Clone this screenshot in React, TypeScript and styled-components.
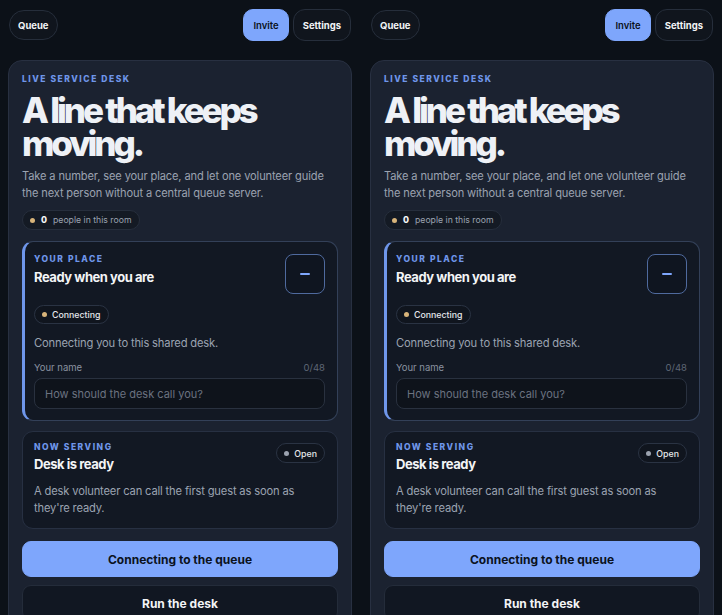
import styled, { createGlobalStyle } from 'styled-components';

const GlobalStyle = createGlobalStyle`
  html, body {
    margin: 0;
    padding: 0;
    background: #0c1118;
    font-family: Inter, "Noto Sans", "Liberation Sans", sans-serif;
    color: #f3f4f6;
  }
  * { box-sizing: border-box; }
`;

function Panel() {
  return (
    <Column>
      <TopBar>
        <PillButton>Queue</PillButton>
        <TopRight>
          <TabButton $active>Invite</TabButton>
          <TabButton>Settings</TabButton>
        </TopRight>
      </TopBar>
      <Card>
        <Eyebrow>Live service desk</Eyebrow>
        <Headline>A line that keeps moving.</Headline>
        <Lead>
          Take a number, see your place, and let one volunteer guide the next person without a central
          queue server.
        </Lead>
        <Chip>
          <Dot $color="#d8b47a" />
          <strong>0</strong> people in this room
        </Chip>

        <SubCard $accent>
          <SubHead>
            <div>
              <Eyebrow>Your place</Eyebrow>
              <SubTitle>Ready when you are</SubTitle>
            </div>
            <SquareButton aria-label="Leave">
              <Minus />
            </SquareButton>
          </SubHead>
          <StatusChip>
            <Dot $color="#d8b47a" />
            Connecting
          </StatusChip>
          <Note>Connecting you to this shared desk.</Note>
          <FieldLabel>
            <span>Your name</span>
            <Counter>0/48</Counter>
          </FieldLabel>
          <NameInput placeholder="How should the desk call you?" />
        </SubCard>

        <SubCard>
          <SubHead>
            <div>
              <Eyebrow>Now serving</Eyebrow>
              <SubTitle $tight>Desk is ready</SubTitle>
            </div>
            <StatusChip $tight>
              <Dot $color="#9ca3af" />
              Open
            </StatusChip>
          </SubHead>
          <Note $spaced>A desk volunteer can call the first guest as soon as they're ready.</Note>
        </SubCard>

        <ActionButton $primary>Connecting to the queue</ActionButton>
        <ActionButton>Run the desk</ActionButton>
      </Card>
    </Column>
  );
}

export default function App() {
  return (
    <>
      <GlobalStyle />
      <Page>
        <Panel />
        <Panel />
      </Page>
    </>
  );
}

const Page = styled.div`
  display: grid;
  grid-template-columns: 344px 344px;
  gap: 18px;
  padding: 0 8px;
  height: 615px;
  overflow: hidden;
`;

const Column = styled.div`
  display: flex;
  flex-direction: column;
`;

const TopBar = styled.div`
  display: flex;
  align-items: center;
  justify-content: space-between;
  padding: 9px 1px 0 1px;
  height: 41px;
  margin-bottom: 19px;
`;

const TopRight = styled.div`
  display: flex;
  gap: 4px;
`;

const PillButton = styled.button`
  height: 30px;
  padding: 0 8px;
  border-radius: 15px;
  border: 1px solid #262e3b;
  background: #10151d;
  color: #f3f4f6;
  font: 700 9.5px Inter, sans-serif;
`;

const TabButton = styled.button<{ $active?: boolean }>`
  height: 32px;
  padding: 0 9px;
  border-radius: ${(p) => (p.$active ? '10px' : '12px')};
  border: 1px solid ${(p) => (p.$active ? '#7ea6fc' : '#262e3b')};
  background: ${(p) => (p.$active ? '#7ea6fc' : '#10151d')};
  color: ${(p) => (p.$active ? '#0b1220' : '#f3f4f6')};
  font: ${(p) => (p.$active ? 600 : 700)} 9.5px Inter, sans-serif;
`;

const Card = styled.div`
  background: #1b2230;
  border: 1px solid #283041;
  border-radius: 14px;
  padding: 12px 13px 20px 13px;
  display: flex;
  flex-direction: column;
  align-items: stretch;
`;

const Eyebrow = styled.div`
  font-size: 8.5px;
  font-weight: 800;
  letter-spacing: 0.18em;
  text-transform: uppercase;
  color: #6f96ea;
  line-height: 12px;
`;

const Headline = styled.h1`
  margin: 9px 0 0 0;
  font-size: 35px;
  font-weight: 800;
  letter-spacing: -0.09em;
  line-height: 33px;
  color: #eef1f6;
  max-width: 250px;
`;

const Lead = styled.p`
  margin: 8px 0 0 0;
  font-size: 11.1px;
  letter-spacing: -0.012em;
  line-height: 16.5px;
  color: #9ba3b1;
`;

const Chip = styled.div`
  align-self: flex-start;
  margin-top: 9px;
  display: inline-flex;
  align-items: center;
  gap: 4px;
  height: 20px;
  padding: 0 7px;
  border-radius: 10px;
  border: 1px solid #262e3c;
  background: #141a24;
  font-size: 8.7px;
  color: #9ba3b1;
  strong {
    color: #f3f4f6;
    font-weight: 800;
    margin: 0 2px 0 1px;
  }
`;

const Dot = styled.span<{ $color: string }>`
  width: 5px;
  height: 5px;
  border-radius: 50%;
  background: ${(p) => p.$color};
  margin-right: 1px;
`;

const SubCard = styled.div<{ $accent?: boolean }>`
  margin-top: ${(p) => (p.$accent ? '11px' : '10px')};
  background: #121823;
  border: 1px solid ${(p) => (p.$accent ? '#334058' : '#273042')};
  border-left: ${(p) => (p.$accent ? '3px solid #6f96ea' : '1px solid #273042')};
  border-radius: 11px;
  padding: ${(p) => (p.$accent ? '11px 12px 11px 9px' : '9px 12px 11px 11px')};
  display: flex;
  flex-direction: column;
`;

const SubHead = styled.div`
  display: flex;
  justify-content: space-between;
  align-items: flex-start;
`;

const SubTitle = styled.div<{ $tight?: boolean }>`
  margin-top: ${(p) => (p.$tight ? '3px' : '4px')};
  font-size: 13px;
  line-height: 16px;
  font-weight: 700;
  letter-spacing: -0.035em;
  color: #f3f4f6;
`;

const SquareButton = styled.button`
  width: 40px;
  height: 40px;
  margin-top: 1px;
  border-radius: 8px;
  border: 1px solid #4f6a9e;
  background: #0f1520;
  display: flex;
  align-items: center;
  justify-content: center;
  padding: 0;
`;

const Minus = styled.span`
  width: 10px;
  height: 2px;
  border-radius: 1px;
  background: #7ea6fc;
`;

const StatusChip = styled.div<{ $tight?: boolean }>`
  align-self: flex-start;
  margin-top: ${(p) => (p.$tight ? '2px' : '11px')};
  display: inline-flex;
  align-items: center;
  gap: 4px;
  height: ${(p) => (p.$tight ? '20px' : '19px')};
  padding: 0 7px;
  border-radius: 10px;
  border: 1px solid #2a3343;
  background: #10151e;
  font-size: 8.8px;
  font-weight: 500;
  color: #e5e7eb;
`;

const Note = styled.p<{ $spaced?: boolean }>`
  margin: 11px 0 0 0;
  font-size: 11.2px;
  letter-spacing: -0.015em;
  line-height: 17px;
  color: #9ba3b1;
`;

const FieldLabel = styled.div`
  margin-top: 10px;
  display: flex;
  justify-content: space-between;
  font-size: 9.5px;
  color: #8a92a0;
`;

const Counter = styled.span`
  color: #5f6775;
`;

const NameInput = styled.input`
  margin-top: 5px;
  height: 31px;
  border-radius: 8px;
  border: 1px solid #29313f;
  background: #0e131b;
  padding: 0 10px;
  font: 400 11px Inter, sans-serif;
  color: #f3f4f6;
  &::placeholder {
    color: #6b7280;
  }
`;

const ActionButton = styled.button<{ $primary?: boolean }>`
  margin-top: ${(p) => (p.$primary ? '12px' : '8px')};
  height: 36px;
  flex-shrink: 0;
  border-radius: 9px;
  border: 1px solid ${(p) => (p.$primary ? '#7ea6fc' : '#242c3a')};
  background: ${(p) => (p.$primary ? '#7ea6fc' : '#111722')};
  color: ${(p) => (p.$primary ? '#0b1220' : '#f3f4f6')};
  font: 700 12px Inter, sans-serif;
`;
